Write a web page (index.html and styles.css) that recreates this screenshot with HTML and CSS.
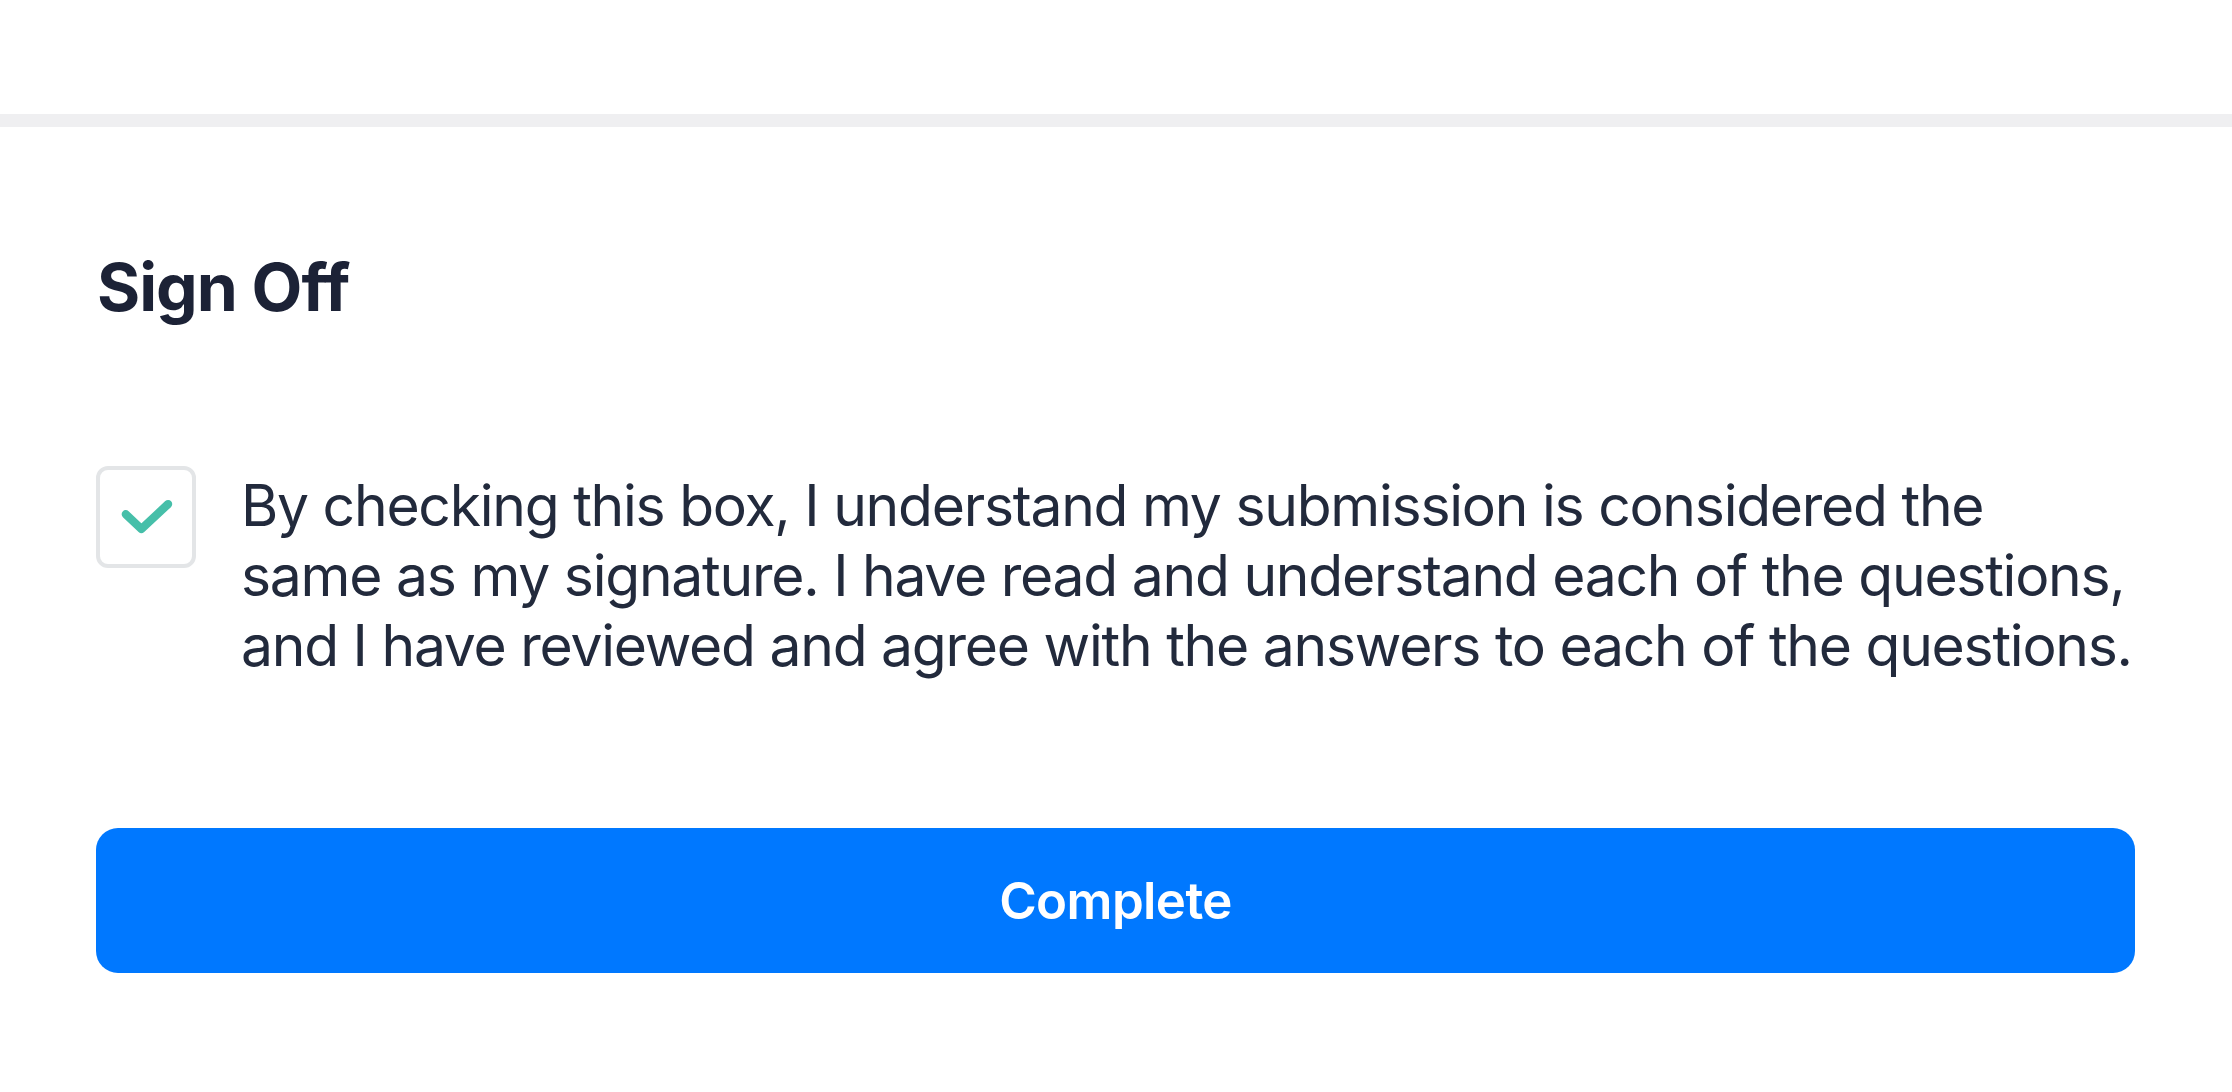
FILE: index.html
```html
<!DOCTYPE html>
<html lang="en">
<head>
<meta charset="utf-8">
<title>Sign Off</title>
<link rel="stylesheet" href="styles.css">
</head>
<body>
  <div class="topbar"></div>
  <div class="divider"></div>
  <main class="content">
    <h2 class="title">Sign Off</h2>
    <label class="agree">
      <span class="checkbox">
        <svg viewBox="0 0 100 100" width="100" height="100" aria-hidden="true">
          <polyline points="28,47 45,63 74,36" fill="none" stroke="#46bfa9" stroke-width="9" stroke-linecap="round" stroke-linejoin="round"/>
        </svg>
      </span>
      <span class="agree-text">By checking this box, I understand my submission is considered the same as my signature. I have read and understand each of the questions, and I have reviewed and agree with the answers to each of the questions.</span>
    </label>
    <button class="complete" type="button">Complete</button>
  </main>
</body>
</html>
```

FILE: styles.css
```css
* { box-sizing: border-box; }

html, body {
  margin: 0;
  padding: 0;
  background: #ffffff;
}

body {
  font-family: Inter, "Noto Sans", "Liberation Sans", sans-serif;
  color: #1f2638;
  width: 2232px;
  height: 1092px;
  overflow: hidden;
}

.topbar {
  height: 114px;
  background: #ffffff;
}

.divider {
  height: 13px;
  background: #efeff1;
}

.content {
  padding: 0 97px 0 96px;
}

.title {
  margin: 120px 0 0 1px;
  font-size: 66px;
  line-height: 80px;
  font-weight: 700;
  color: #1c2236;
  letter-spacing: -1px;
}

.agree {
  display: flex;
  align-items: flex-start;
  gap: 45px;
  margin-top: 139px;
}

.checkbox {
  flex: 0 0 auto;
  width: 100px;
  height: 102px;
  border: 4px solid #e3e5e7;
  border-radius: 12px;
  display: flex;
  align-items: center;
  justify-content: center;
  background: #ffffff;
}

.checkbox svg {
  width: 92px;
  height: 94px;
}

.agree-text {
  margin-top: 5px;
  font-size: 57px;
  line-height: 70px;
  font-weight: 400;
  letter-spacing: -1.25px;
  color: #222a3c;
}

.complete {
  display: block;
  width: 100%;
  height: 145px;
  margin-top: 147px;
  border: none;
  border-radius: 22px;
  background: #0078ff;
  color: #ffffff;
  font-family: Inter, "Noto Sans", "Liberation Sans", sans-serif;
  font-size: 51px;
  font-weight: 600;
  letter-spacing: -0.6px;
  cursor: pointer;
}
```
